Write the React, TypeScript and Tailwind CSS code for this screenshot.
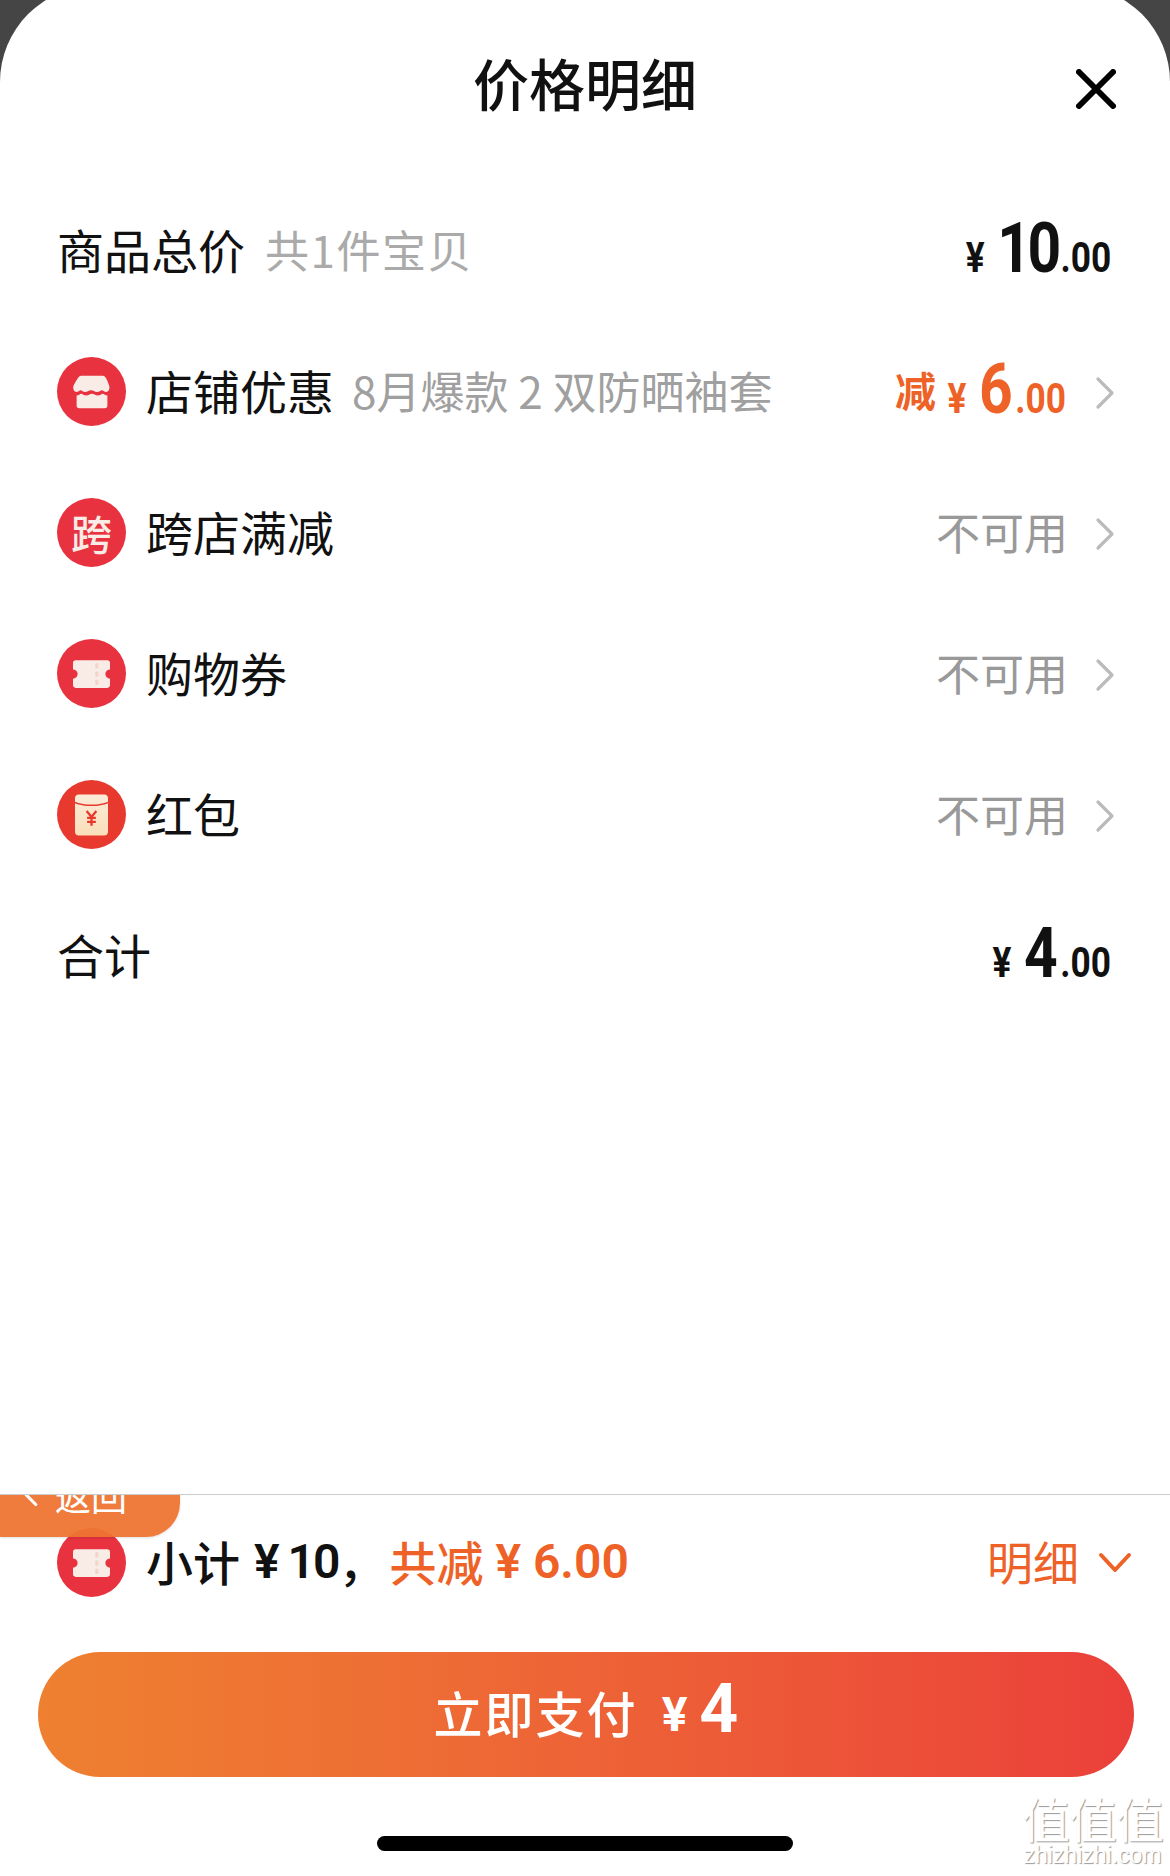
import { ChevronLeft } from 'lucide-react';

const cjk = "font-['Noto_Sans_CJK_SC','Noto_Sans',sans-serif]";
const din = "font-['Roboto','Noto_Sans_CJK_SC',sans-serif]";

function IconCircle({ children, color = 'bg-[#E8323F]' }: { children: React.ReactNode; color?: string }) {
  return (
    <div className={`w-[69px] h-[69px] rounded-full ${color} flex items-center justify-center shrink-0 mr-[20px]`}>
      {children}
    </div>
  );
}

function StoreIcon() {
  return (
    <svg width="38" height="34" viewBox="0 0 42 36">
      <path d="M9 0h24c3 0 5 5 7 11 1 4-1 7-3 7-2.500 0-3.500-2-5-2s-3 2-5.500 2-3.500-2-6.500-2-4 2-6.500 2-3.500-2-5-2-2.500 2-5 2c-2 0-4-3-3-7C4 5 6 0 9 0z" fill="#F9ECE6" />
      <path d="M4 22c2.500 0 3.500-2 5-2s3 2 5.500 2 4-2 6.500-2 4 2 6.500 2 4-2 5.500-2 2.500 2 5 2v11c0 2-1 3-3 3H7c-2 0-3-1-3-3z" fill="#F9ECE6" />
    </svg>
  );
}

function TicketIcon() {
  return (
    <svg width="37" height="28" viewBox="0 0 40 30">
      <path d="M3 0h34c2 0 3 1 3 3v7a5 5 0 0 0 0 10v7c0 2-1 3-3 3H3c-2 0-3-1-3-3v-7a5 5 0 0 0 0-10V3c0-2 1-3 3-3z" fill="#F9ECE6" />
      <rect x="24" y="3" width="3.500" height="6" rx="1.700" fill="#F2D5C8" />
      <rect x="24" y="12" width="3.500" height="6" rx="1.700" fill="#F2D5C8" />
      <rect x="24" y="21" width="3.500" height="6" rx="1.700" fill="#F2D5C8" />
    </svg>
  );
}

function PacketIcon() {
  return (
    <svg width="33" height="42" viewBox="0 0 34 42">
      <defs>
        <linearGradient id="pk" x1="0" y1="0" x2="0" y2="1">
          <stop offset="0" stopColor="#FBEBD8" />
          <stop offset="1" stopColor="#FADFB9" />
        </linearGradient>
      </defs>
      <rect width="34" height="42" rx="4" fill="url(#pk)" />
      <path d="M0 8c8 4 26 4 34 0" fill="none" stroke="#E8392F" strokeWidth="1.500" />
      <path d="M12 17l5 6 5-6M17 23v9M12.500 24h9M12.500 28h9" fill="none" stroke="#E8392F" strokeWidth="2.400" />
    </svg>
  );
}

function RowChevron() {
  return (
    <svg width="20" height="34" viewBox="0 0 20 34" className="shrink-0 mt-[2px]">
      <path d="M3 3l14 14L3 31" fill="none" stroke="#bbb" strokeWidth="3.200" strokeLinecap="round" strokeLinejoin="round" />
    </svg>
  );
}

// Digits in the picture are a narrow DIN, so Roboto is squeezed from the right edge.
function Money({ big, color = 'text-[#111]', width, tight = '' }: { big: string; color?: string; width: string; tight?: string }) {
  return (
    <div className={`flex justify-end ${width}`}>
      <div className={`flex items-baseline shrink-0 origin-right scale-x-[0.84] font-bold ${din} ${color}`}>
        <span className="text-[42px] mr-[15px]">¥</span>
        <span className={`text-[70px] leading-none ${tight}`}>{big}</span>
        <span className="text-[42px] ml-[3px]">.00</span>
      </div>
    </div>
  );
}

function UnavailableRow({ icon, label }: { icon: React.ReactNode; label: string }) {
  return (
    <div className="h-[141px] pl-[57px] pr-[55px] flex items-center">
      {icon}
      <span className="text-[47px] text-[#111] pb-[3px]">{label}</span>
      <span className="ml-auto text-[44px] text-[#999] mr-[27px] pb-[3px]">不可用</span>
      <RowChevron />
    </div>
  );
}

export default function App() {
  return (
    <div className={`h-[1876px] bg-[#454545] overflow-hidden ${cjk}`}>
      <div className="h-[1890px] -mt-[14px] bg-white rounded-t-[96px] flex flex-col relative">
        {/* Header */}
        <div className="h-[100px] mt-[46px] relative flex items-center justify-center">
          <h1 className="text-[56px] font-medium text-[#111]">价格明细</h1>
          <svg width="40" height="40" viewBox="0 0 40 40" className="absolute right-[54px] top-[37px]">
            <path d="M3 3l34 34M37 3L3 37" fill="none" stroke="#000" strokeWidth="6" strokeLinecap="round" />
          </svg>
        </div>

        {/* Rows */}
        <div className="mt-[48px]">
          <div className="h-[141px] pl-[57px] pr-[59px] flex items-center">
            <span className="text-[47px] text-[#111] pb-[3px]">商品总价</span>
            <span className="ml-[20px] text-[44px] text-[#aaa] tracking-[1.500px] pb-[3px]">共1件宝贝</span>
            <div className="ml-auto">
              <Money big="10" width="w-[141px]" tight="tracking-[-4px]" />
            </div>
          </div>

          <div className="h-[141px] pl-[57px] pr-[55px] flex items-center">
            <IconCircle>
              <StoreIcon />
            </IconCircle>
            <span className="text-[47px] text-[#111] pb-[3px]">店铺优惠</span>
            <span className="ml-[18px] text-[44px] text-[#a0a0a0] pb-[3px]">8月爆款 2 双防晒袖套</span>
            <span className="ml-auto text-[41px] font-bold text-[#EE6227] mr-[10px] pb-[3px]">减</span>
            <Money big="6" color="text-[#EE6227]" width="w-[120px]" />
            <div className="ml-[29px]">
              <RowChevron />
            </div>
          </div>

          <UnavailableRow
            label="跨店满减"
            icon={
              <IconCircle>
                <span className="text-[41px] font-medium text-[#F9ECE6]">跨</span>
              </IconCircle>
            }
          />
          <UnavailableRow
            label="购物券"
            icon={
              <IconCircle>
                <TicketIcon />
              </IconCircle>
            }
          />
          <UnavailableRow
            label="红包"
            icon={
              <IconCircle color="bg-[#E8392F]">
                <PacketIcon />
              </IconCircle>
            }
          />

          <div className="h-[141px] pl-[57px] pr-[59px] flex items-center">
            <span className="text-[47px] text-[#111] pb-[3px]">合计</span>
            <div className="ml-auto">
              <Money big="4" width="w-[121px]" />
            </div>
          </div>
        </div>

        <div className="flex-1" />

        {/* Footer */}
        <div className="border-t border-[#ccc] h-[382px] relative overflow-hidden">
          <div className="h-[134px] pl-[57px] pr-[38px] flex items-center pt-[1px]">
            <IconCircle>
              <TicketIcon />
            </IconCircle>
            <span className="text-[47px] font-medium text-[#111] pb-[3px]">小计</span>
            <span className={`ml-[14px] text-[48px] font-semibold text-[#111] tracking-[-2px] pb-[2px] ${din}`}>¥ 10</span>
            <span className="text-[47px] font-medium text-[#111] pb-[3px]">，</span>
            <span className="text-[47px] font-medium text-[#EE6227] ml-[4px] pb-[3px]">共减</span>
            <span className={`ml-[12px] text-[48px] font-semibold text-[#EE6227] pb-[2px] ${din}`}>¥ 6.00</span>
            <span className="ml-auto text-[46px] text-[#EE6227] mr-[19px] pb-[4px]">明细</span>
            <svg width="34" height="22" viewBox="0 0 34 22">
              <path d="M3 3l14 15L31 3" fill="none" stroke="#EE6227" strokeWidth="4" strokeLinecap="round" strokeLinejoin="round" />
            </svg>
          </div>

          {/* Return tab over the row */}
          <div className="absolute left-0 -top-[42px] w-[180px] h-[84px] bg-[#EE7533]/95 rounded-r-[34px] flex items-center pl-[12px] text-white shadow-sm">
            <ChevronLeft size={38} strokeWidth={2} />
            <span className="ml-[5px] text-[36px]">返回</span>
          </div>

          <button className="mx-[38px] mt-[23px] w-[1096px] h-[125px] rounded-full bg-gradient-to-r from-[#EE8030] to-[#EB3F3A] flex items-center justify-center text-white">
            <span className="text-[49px] font-medium tracking-[2px] pb-[6px]">立即支付</span>
            <span className={`ml-[24px] text-[48px] font-bold ${din}`}>¥</span>
            <span className={`ml-[12px] text-[68px] font-bold leading-none -mt-[12px] ${din}`}>4</span>
          </button>

          <div className="mt-[59px] mx-auto w-[416px] h-[15px] rounded-full bg-black" />

          {/* Watermark */}
          <div className="absolute right-[7px] top-[296px] flex flex-col items-center text-white [text-shadow:1px_1px_1px_#999]">
            <span className="text-[48px] leading-[52px] tracking-[-1px]">值值值</span>
            <span className="text-[23px] leading-[24px] font-['Liberation_Sans']">zhizhizhi.com</span>
          </div>
        </div>
      </div>
    </div>
  );
}
